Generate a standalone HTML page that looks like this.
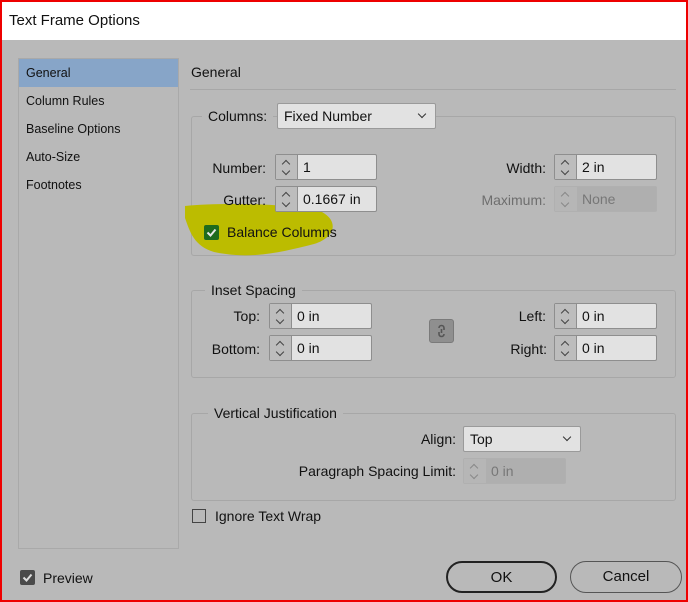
<!DOCTYPE html>
<html><head><meta charset="utf-8"><style>
*{box-sizing:border-box;margin:0;padding:0}
body{width:688px;height:602px;overflow:hidden;background:#b9b9b9;font-family:"Liberation Sans",sans-serif;font-size:14px;color:#111;position:relative}
.a{position:absolute}
.frame{left:0;top:0;width:688px;height:602px;border:2px solid #ee0000;border-right-width:2px}
.title{left:2px;top:2px;width:684px;height:38px;background:#fff;font-size:15px;padding:10px 0 0 7px;color:#111}
.list{left:18px;top:58px;width:161px;height:491px;border:1px solid #a9a9a9}
.list div{height:28px;line-height:29px;padding-left:7px;font-size:12.5px}
.sel{background:#87a5c8}
.grp{border:1px solid #a7a7a7;border-radius:3px}
.leg{background:#b9b9b9;padding:0 6px;font-size:14px}
.lbl{font-size:14px;text-align:right}
.sp{height:26px;border:1px solid #8e8e8e;border-radius:2px;background:#e2e2e2;display:flex}
.sp .ar{width:22px;border-right:1px solid #8e8e8e;background:#bdbdbd;position:relative}
.sp .ar:before{content:"";position:absolute;left:7px;top:6px;width:5px;height:5px;border-left:1px solid #444;border-top:1px solid #444;transform:rotate(45deg)}
.sp .ar:after{content:"";position:absolute;left:7px;top:13px;width:5px;height:5px;border-right:1px solid #444;border-bottom:1px solid #444;transform:rotate(45deg)}
.sp .v{padding:4px 0 0 5px;font-size:14px}
.sp.dis{border-color:#b0b0b0;background:#afafaf}
.sp.dis .ar{background:#b6b6b6;border-color:#b6b6b6}
.sp.dis .ar:before,.sp.dis .ar:after{border-color:#888}
.sp.dis .v{color:#777}
.dd{height:26px;border:1px solid #9a9a9a;border-radius:2px;background:#e2e2e2;padding:4px 0 0 6px}
.dd:after{content:"";position:absolute;right:10px;top:7px;width:5px;height:5px;border-right:1px solid #333;border-bottom:1px solid #333;transform:rotate(45deg)}
.btn{height:32px;border-radius:16px;text-align:center;line-height:29px;font-size:15px}
</style></head><body>
<div class="a title">Text Frame Options</div>
<div class="a list">
<div class="sel">General</div><div>Column Rules</div><div>Baseline Options</div><div>Auto-Size</div><div>Footnotes</div>
</div>
<div class="a" style="left:191px;top:64px;font-size:14px">General</div>
<div class="a" style="left:190px;top:89px;width:486px;height:1px;background:#a7a7a7"></div>

<div class="a grp" style="left:191px;top:116px;width:485px;height:140px"></div>
<svg class="a" style="left:182px;top:202px" width="160" height="62"><path d="M3 4 C40 0 120 2 140 10 C158 20 152 36 132 42 C100 50 70 58 32 50 C12 44 8 30 3 16 Z" fill="#bcbc00"/></svg>
<div class="a leg" style="left:202px;top:108px;padding-top:0">Columns:</div>
<div class="a dd" style="left:277px;top:103px;width:159px">Fixed Number</div>
<div class="a lbl" style="left:190px;top:160px;width:76px">Number:</div>
<div class="a sp" style="left:275px;top:154px;width:102px"><div class="ar"></div><div class="v">1</div></div>
<div class="a lbl" style="left:190px;top:192px;width:76px">Gutter:</div>
<div class="a sp" style="left:275px;top:186px;width:102px"><div class="ar"></div><div class="v">0.1667 in</div></div>
<div class="a lbl" style="left:440px;top:160px;width:106px">Width:</div>
<div class="a sp" style="left:554px;top:154px;width:103px"><div class="ar"></div><div class="v">2 in</div></div>
<div class="a lbl" style="left:440px;top:192px;width:106px;color:#6e6e6e">Maximum:</div>
<div class="a sp dis" style="left:554px;top:186px;width:103px"><div class="ar"></div><div class="v">None</div></div>

<div class="a" style="left:204px;top:225px;width:15px;height:15px;background:#1e6b1e;border-radius:2px"></div>
<svg class="a" style="left:204px;top:225px" width="15" height="15"><path d="M3.5 7.5 L6.5 10.5 L11.5 4.5" stroke="#e8e8e8" stroke-width="2" fill="none"/></svg>
<div class="a" style="left:227px;top:224px">Balance Columns</div>

<div class="a grp" style="left:191px;top:290px;width:485px;height:88px"></div>
<div class="a leg" style="left:205px;top:282px">Inset Spacing</div>
<div class="a lbl" style="left:190px;top:308px;width:70px">Top:</div>
<div class="a sp" style="left:269px;top:303px;width:103px"><div class="ar"></div><div class="v">0 in</div></div>
<div class="a lbl" style="left:190px;top:341px;width:70px">Bottom:</div>
<div class="a sp" style="left:269px;top:335px;width:103px"><div class="ar"></div><div class="v">0 in</div></div>
<div class="a" style="left:429px;top:319px;width:25px;height:24px;background:#8f8f8f;border:1px solid #7a7a7a;border-radius:3px"></div>
<svg class="a" style="left:429px;top:319px" width="25" height="24"><path d="M10 9 a2.5 2.5 0 0 1 5 0 v2 M15 15 a2.5 2.5 0 0 1 -5 0 v-2 M12.5 10 v4" stroke="#555" stroke-width="1.6" fill="none"/></svg>
<div class="a lbl" style="left:480px;top:308px;width:66px">Left:</div>
<div class="a sp" style="left:554px;top:303px;width:103px"><div class="ar"></div><div class="v">0 in</div></div>
<div class="a lbl" style="left:480px;top:341px;width:67px">Right:</div>
<div class="a sp" style="left:554px;top:335px;width:103px"><div class="ar"></div><div class="v">0 in</div></div>

<div class="a grp" style="left:191px;top:413px;width:485px;height:88px"></div>
<div class="a leg" style="left:208px;top:405px">Vertical Justification</div>
<div class="a lbl" style="left:380px;top:431px;width:76px">Align:</div>
<div class="a dd" style="left:463px;top:426px;width:118px">Top</div>
<div class="a lbl" style="left:270px;top:463px;width:186px">Paragraph Spacing Limit:</div>
<div class="a sp dis" style="left:463px;top:458px;width:103px"><div class="ar"></div><div class="v">0 in</div></div>

<div class="a" style="left:192px;top:509px;width:14px;height:14px;border:1px solid #444"></div>
<div class="a" style="left:215px;top:508px">Ignore Text Wrap</div>

<div class="a" style="left:20px;top:570px;width:15px;height:15px;background:#4a4a4a;border-radius:2px"></div>
<svg class="a" style="left:20px;top:570px" width="15" height="15"><path d="M3.5 7.5 L6.5 10.5 L11.5 4.5" stroke="#ddd" stroke-width="2" fill="none"/></svg>
<div class="a" style="left:43px;top:570px">Preview</div>

<div class="a btn" style="left:446px;top:561px;width:111px;border:2px solid #222">OK</div>
<div class="a btn" style="left:570px;top:561px;width:112px;border:1px solid #555;line-height:30px">Cancel</div>
<div class="a frame"></div>
</body></html>
